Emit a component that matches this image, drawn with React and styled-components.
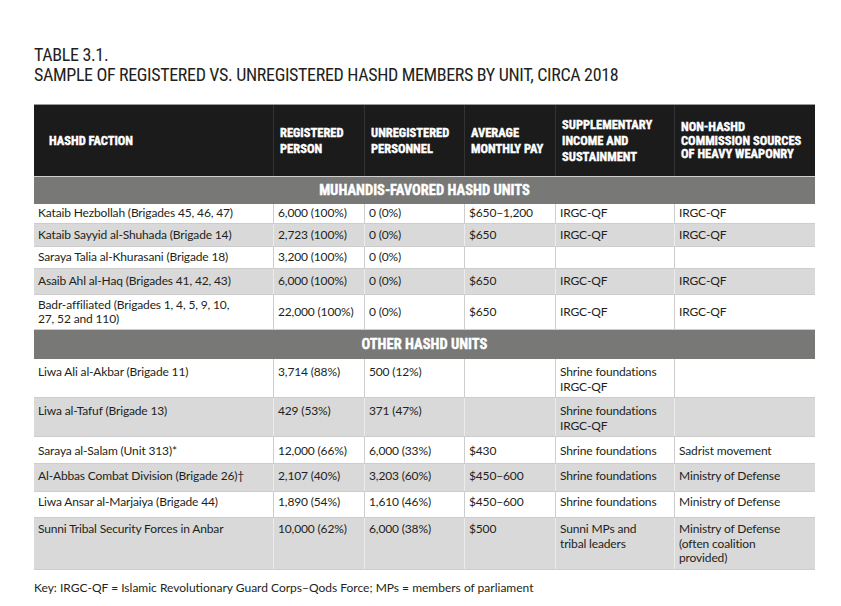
import React from 'react';
import styled, { createGlobalStyle } from 'styled-components';

const GlobalStyle = createGlobalStyle`
  html, body {
    margin: 0;
    background: #ffffff;
  }
  body {
    font-family: Lato, "Open Sans", sans-serif;
    color: #231f20;
  }
`;

const COLS = '239px 91px 100px 91px 119px 141px';
const CONDENSED = '"Roboto Condensed", "Liberation Sans Narrow", "DejaVu Sans Condensed", "Liberation Sans", sans-serif';

const headers = [
    { lines: ['HASHD FACTION'] },
    { lines: ['REGISTERED', 'PERSON'] },
    { lines: ['UNREGISTERED', 'PERSONNEL'] },
    { lines: ['AVERAGE', 'MONTHLY PAY'] },
    { lines: ['SUPPLEMENTARY', 'INCOME AND', 'SUSTAINMENT'] },
    { lines: ['NON-HASHD', 'COMMISSION SOURCES', 'OF HEAVY WEAPONRY'], tight: true },
];

// line breaks follow the printed table
const sections = [
    {
        title: 'MUHANDIS-FAVORED HASHD UNITS',
        height: 27,
        middle: true,
        rows: [
            { h: 20, cells: ['Kataib Hezbollah (Brigades 45, 46, 47)', '6,000 (100%)', '0 (0%)', '$650–1,200', 'IRGC-QF', 'IRGC-QF'] },
            { h: 23, cells: ['Kataib Sayyid al-Shuhada (Brigade 14)', '2,723 (100%)', '0 (0%)', '$650', 'IRGC-QF', 'IRGC-QF'] },
            { h: 22, cells: ['Saraya Talia al-Khurasani (Brigade 18)', '3,200 (100%)', '0 (0%)', '', '', ''] },
            { h: 26, cells: ['Asaib Ahl al-Haq (Brigades 41, 42, 43)', '6,000 (100%)', '0 (0%)', '$650', 'IRGC-QF', 'IRGC-QF'] },
            { h: 35, cells: ['Badr-affiliated (Brigades 1, 4, 5, 9, 10,\n27, 52 and 110)', '22,000 (100%)', '0 (0%)', '$650', 'IRGC-QF', 'IRGC-QF'] },
        ],
    },
    {
        title: 'OTHER HASHD UNITS',
        height: 29,
        rows: [
            { h: 39, pt: 6, cells: ['Liwa Ali al-Akbar (Brigade 11)', '3,714 (88%)', '500 (12%)', '', 'Shrine foundations\nIRGC-QF', ''] },
            { h: 39, pt: 6, cells: ['Liwa al-Tafuf (Brigade 13)', '429 (53%)', '371 (47%)', '', 'Shrine foundations\nIRGC-QF', ''] },
            { h: 27, pt: 7, cells: ['Saraya al-Salam (Unit 313)*', '12,000 (66%)', '6,000 (33%)', '$430', 'Shrine foundations', 'Sadrist movement'] },
            { h: 28, pt: 5, cells: ['Al-Abbas Combat Division (Brigade 26)†', '2,107 (40%)', '3,203 (60%)', '$450–600', 'Shrine foundations', 'Ministry of Defense'] },
            { h: 26, pt: 3, cells: ['Liwa Ansar al-Marjaiya (Brigade 44)', '1,890 (54%)', '1,610 (46%)', '$450–600', 'Shrine foundations', 'Ministry of Defense'] },
            { h: 52, pt: 4, cells: ['Sunni Tribal Security Forces in Anbar', '10,000 (62%)', '6,000 (38%)', '$500', 'Sunni MPs and\ntribal leaders', 'Ministry of Defense\n(often coalition\nprovided)'] },
        ],
    },
];

const App = () => {
    return (
        <>
            <GlobalStyle />
            <Page>
                <Title>
                    TABLE 3.1.
                    <br />
                    SAMPLE OF REGISTERED VS. UNREGISTERED HASHD MEMBERS BY UNIT, CIRCA 2018
                </Title>
                <Table>
                    <HeadRow>
                        {headers.map((col, i) => (
                            <HeadCell key={i} $first={i === 0} $tight={col.tight}>
                                <span>
                                    {col.lines.map((line, j) => (
                                        <React.Fragment key={j}>
                                            {j > 0 && <br />}
                                            {line}
                                        </React.Fragment>
                                    ))}
                                </span>
                            </HeadCell>
                        ))}
                    </HeadRow>
                    {sections.map((section) => (
                        <React.Fragment key={section.title}>
                            <SectionRow $h={section.height}>{section.title}</SectionRow>
                            {section.rows.map((row, i) => (
                                <Row key={i} $h={row.h} $shaded={i % 2 === 1}>
                                    {row.cells.map((text, j) => (
                                        <Cell
                                            key={j}
                                            $first={j === 0}
                                            $middle={section.middle}
                                            $pt={row.pt}
                                            $shaded={i % 2 === 1}
                                        >
                                            {text}
                                        </Cell>
                                    ))}
                                </Row>
                            ))}
                        </React.Fragment>
                    ))}
                </Table>
                <Key>Key: IRGC-QF = Islamic Revolutionary Guard Corps–Qods Force; MPs = members of parliament</Key>
            </Page>
        </>
    );
};

const Page = styled.div`
  width: 841px;
  height: 606px;
  box-sizing: border-box;
  padding: 45px 0 0 34px;
  overflow: hidden;
`;

const Title = styled.h1`
  margin: 0;
  font-family: ${CONDENSED};
  font-stretch: condensed;
  font-weight: 400;
  font-size: 18px;
  line-height: 20px;
  letter-spacing: -0.35px;
  color: #231f20;
`;

const Table = styled.div`
  width: 781px;
  margin-top: 19px;
`;

const HeadRow = styled.div`
  display: grid;
  grid-template-columns: ${COLS};
  height: 73px;
  box-sizing: border-box;
  background: #1b1b1b;
  border-top: 1px solid #9a9a9a;
  border-bottom: 1px solid #cfcfcf;
`;

const HeadCell = styled.div`
  display: flex;
  align-items: center;
  padding-left: ${(p) => (p.$first ? '15px' : '6px')};
  border-left: ${(p) => (p.$first ? 'none' : '1px solid #333333')};
  font-family: ${CONDENSED};
  font-stretch: condensed;
  font-weight: 700;
  font-size: 12.5px;
  line-height: ${(p) => (p.$tight ? '13.5px' : '16px')};
  -webkit-text-stroke: 0.4px #ffffff;
  color: #ffffff;
`;

const SectionRow = styled.div`
  height: ${(p) => p.$h}px;
  display: flex;
  align-items: center;
  justify-content: center;
  background: #787877;
  font-family: ${CONDENSED};
  font-stretch: condensed;
  font-weight: 700;
  font-size: 14.5px;
  -webkit-text-stroke: 0.4px #ffffff;
  color: #ffffff;
`;

const Row = styled.div`
  display: grid;
  grid-template-columns: ${COLS};
  height: ${(p) => p.$h}px;
  background: ${(p) => (p.$shaded ? '#d9d9d9' : '#ffffff')};
  border-bottom: 1px solid #cdcdcd;
  box-sizing: border-box;
`;

const Cell = styled.div`
  display: flex;
  align-items: ${(p) => (p.$middle ? 'center' : 'flex-start')};
  padding: ${(p) => (p.$middle ? '0' : `${p.$pt}px`)} 4px 0;
  border-left: ${(p) => (p.$first ? 'none' : `1px solid ${p.$shaded ? '#ececec' : '#cdcdcd'}`)};
  font-size: 12px;
  line-height: 14.5px;
  letter-spacing: -0.15px;
  white-space: pre-line;
  color: #231f20;
`;

const Key = styled.p`
  margin: 10px 0 0;
  font-size: 12px;
  line-height: 16px;
  color: #231f20;
`;

export default App;
